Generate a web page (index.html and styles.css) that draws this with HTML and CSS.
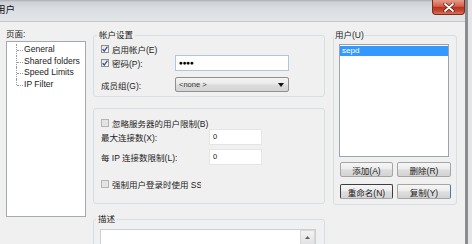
FILE: index.html
```html
<!DOCTYPE html>
<html lang="zh">
<head>
<meta charset="utf-8">
<title>用户</title>
<link rel="stylesheet" href="styles.css">
</head>
<body>
<div class="window">
  <div class="titlebar">
    <span class="title">用户</span>
    <span class="close"><svg width="12" height="9" viewBox="0 0 12 9"><path d="M2 1 L10 8 M10 1 L2 8" stroke="#5a1a12" stroke-width="3.2" stroke-linecap="round"/><path d="M2 1 L10 8 M10 1 L2 8" stroke="#ffffff" stroke-width="1.8" stroke-linecap="round"/></svg></span>
  </div>
  <div class="client">
    <div class="pages">
      <div class="label">页面:</div>
      <ul class="tree">
        <li>General</li>
        <li>Shared folders</li>
        <li>Speed Limits</li>
        <li>IP Filter</li>
      </ul>
    </div>
    <div class="middle">
      <fieldset class="group g-account">
        <legend>帐户设置</legend>
        <label class="check"><span class="box"><svg width="6" height="6" viewBox="0 0 6 6"><path d="M0.6 3.2 L2.3 5 L5.4 0.6" fill="none" stroke="#3a4f86" stroke-width="1.3"/></svg></span>启用帐户(E)</label>
        <div class="form-grid">
          <label class="check"><span class="box"><svg width="6" height="6" viewBox="0 0 6 6"><path d="M0.6 3.2 L2.3 5 L5.4 0.6" fill="none" stroke="#3a4f86" stroke-width="1.3"/></svg></span>密码(P):</label>
          <div class="textbox pwd">●●●●</div>
          <span class="text">成员组(G):</span>
          <div class="select"><span>&lt;none &gt;</span><svg width="6" height="4" viewBox="0 0 6 4"><path d="M0 0 H6 L3 4 Z" fill="#111"/></svg></div>
        </div>
      </fieldset>
      <fieldset class="group g-limits">
        <label class="check off"><span class="box"></span>忽略服务器的用户限制(B)</label>
        <div class="limit-grid">
          <span class="text">最大连接数(X):</span>
          <div class="num">0</div>
          <span class="text">每 IP 连接数限制(L):</span>
          <div class="num">0</div>
        </div>
        <label class="check off ssl"><span class="box"></span><span class="clip">强制用户登录时使用 SSL</span></label>
      </fieldset>
      <fieldset class="group g-desc">
        <legend>描述</legend>
        <div class="textarea"><div class="scroll"><span class="up"><svg width="5" height="3" viewBox="0 0 5 3"><path d="M0 3 L2.5 0 L5 3 Z" fill="#606060"/></svg></span></div></div>
      </fieldset>
    </div>
    <div class="right">
      <fieldset class="group g-users">
        <legend>用户(U)</legend>
        <div class="listbox"><div class="item selected">sepd</div></div>
        <div class="buttons">
          <span class="btn">添加(A)</span>
          <span class="btn">删除(R)</span>
          <span class="btn focus">重命名(N)</span>
          <span class="btn hover">复制(Y)</span>
        </div>
      </fieldset>
    </div>
  </div>
</div>
</body>
</html>
```
FILE: styles.css
```css
* { box-sizing: border-box; }

body {
  margin: 0;
  width: 472px;
  height: 244px;
  overflow: hidden;
  background: #e4e5e7;
  font-family: "Liberation Sans", "Noto Sans CJK SC", sans-serif;
  font-size: 8.5px;
  color: #1b1b1b;
}

.window {
  width: 468px;
  height: 244px;
  display: flex;
  flex-direction: column;
  border-right: 3px solid #8a8d92;
}

.titlebar {
  height: 22px;
  flex: none;
  display: flex;
  justify-content: space-between;
  align-items: flex-start;
  background: linear-gradient(#a9aeb4 0, #cdd1d6 2px, #dadde1 9px, #e2e5e8 100%);
  border-bottom: 1px solid #c6cace;
  overflow: hidden;
}

.title {
  font-size: 9.5px;
  line-height: 12px;
  margin: 4px 0 0 -4px;
  color: #111;
}

.close {
  width: 33px;
  height: 15px;
  border: 1px solid #7d2a1f;
  border-top: none;
  border-radius: 0 0 4px 4px;
  background: linear-gradient(#e79a89 0, #d0614d 45%, #b8321e 52%, #c94a33 80%, #d9735c 100%);
  display: flex;
  align-items: center;
  justify-content: center;
}

.client {
  flex: 1;
  min-height: 0;
  display: flex;
  background: #f0f0f0;
  overflow: hidden;
}

/* left page tree */
.pages {
  width: 93px;
  flex: none;
  padding: 6px 0 0 6px;
}

.pages .label {
  height: 13px;
  line-height: 12px;
}

.tree {
  width: 80px;
  height: 176px;
  margin: 0;
  padding: 2px 0 0 0;
  list-style: none;
  background: #fff;
  border: 1px solid #a3aab3;
  font-size: 8.6px;
}

.tree li {
  position: relative;
  line-height: 11.7px;
  padding-left: 17px;
  color: #222;
}

.tree li::before {
  content: "";
  position: absolute;
  left: 9px;
  top: 0;
  height: 100%;
  border-left: 1px dotted #9a9a9a;
}

.tree li:last-child::before { height: 50%; }

.tree li::after {
  content: "";
  position: absolute;
  left: 10px;
  top: 50%;
  width: 6px;
  border-top: 1px dotted #9a9a9a;
}

/* columns */
.middle {
  width: 232px;
  flex: none;
  padding-top: 7px;
  display: flex;
  flex-direction: column;
}

.right {
  width: 124px;
  flex: none;
  margin-left: 8px;
  padding-top: 7px;
}

.group {
  margin: 0;
  min-width: 0;
  border: 1px solid #d5dfe5;
  border-radius: 3px;
}

.group legend {
  line-height: 12px;
  padding: 0 2px;
  margin-left: -4px;
}

.check {
  display: flex;
  align-items: center;
  gap: 3px;
  height: 12px;
  white-space: nowrap;
}

.box {
  width: 8px;
  height: 8px;
  flex: none;
  border: 1px solid #8e8f8f;
  background: linear-gradient(135deg, #e6e6e6, #fbfbfb);
  display: flex;
  align-items: center;
  justify-content: center;
}

.check.off .box {
  border-color: #b4b4b4;
  background: #e4e4e4;
}

.text { white-space: nowrap; }

/* account group */
.g-account {
  padding: 2px 7px 4px 7px;
}

.form-grid {
  display: grid;
  grid-template-columns: 74px 114px;
  row-gap: 6px;
  align-items: center;
}

.textbox {
  height: 16px;
  background: #fff;
  border: 1px solid #b3c6d8;
}

.pwd {
  padding-left: 3px;
  font-size: 6.5px;
  line-height: 14px;
  letter-spacing: -0.3px;
  color: #000;
}

.select {
  height: 15px;
  border: 1px solid #8f9092;
  border-radius: 2px;
  background: linear-gradient(#f4f4f4, #e9e9e9 48%, #dcdcdc 52%, #d4d4d4);
  display: flex;
  align-items: center;
  justify-content: space-between;
  padding: 0 4px 0 3px;
  font-size: 7.5px;
  color: #333;
}

/* limits group */
.g-limits {
  margin-top: 11px;
  padding: 8px 7px 13px 7px;
}

.limit-grid {
  display: grid;
  grid-template-columns: 108px 53px;
  row-gap: 4px;
  align-items: center;
}

.num {
  height: 16px;
  background: #fff;
  border: 1px solid #e4e5e7;
  padding: 2px 0 0 3px;
  font-size: 7.5px;
  line-height: 10px;
}

.ssl { margin-top: 13px; }

.clip {
  width: 89px;
  overflow: hidden;
  white-space: nowrap;
}

/* description group */
.g-desc {
  margin-top: 9px;
  padding: 4px 8px 0 6px;
  height: 60px;
  flex: none;
}

.textarea {
  height: 40px;
  background: #fff;
  border: 1px solid #c9d0d7;
  display: flex;
  justify-content: flex-end;
}

.scroll {
  width: 15px;
  background: #f2f2f2;
}

.up {
  height: 15px;
  display: flex;
  align-items: center;
  justify-content: center;
  background: linear-gradient(#f3f3f3, #e2e2e2);
  border: 1px solid #d8d8d8;
}

/* users group */
.g-users {
  padding: 3px 7px 5px 5px;
}

.g-users legend {
  padding: 0 1px;
  margin-left: -5px;
}

.listbox {
  width: 110px;
  height: 113px;
  background: #fff;
  border: 1px solid #9ba3ac;
  padding-top: 1px;
}

.item {
  height: 10px;
  line-height: 10px;
  padding-left: 2px;
  font-size: 8px;
}

.item.selected {
  background: #3399ff;
  color: #fff;
}

.buttons {
  display: grid;
  grid-template-columns: 53px 54px;
  column-gap: 4px;
  row-gap: 7px;
  margin: 5px 0 0 1px;
}

.btn {
  height: 15px;
  border: 1px solid #a5a5a5;
  border-radius: 2px;
  background: linear-gradient(#f6f6f6, #ececec 45%, #dedede 52%, #d3d3d3);
  display: flex;
  align-items: center;
  justify-content: center;
  white-space: nowrap;
}

.btn.focus {
  border-color: #3e3e3e #3e3e3e #a5a5a5 #3e3e3e;
}

.btn.hover {
  border-right-color: #3c7fb1;
}
```
